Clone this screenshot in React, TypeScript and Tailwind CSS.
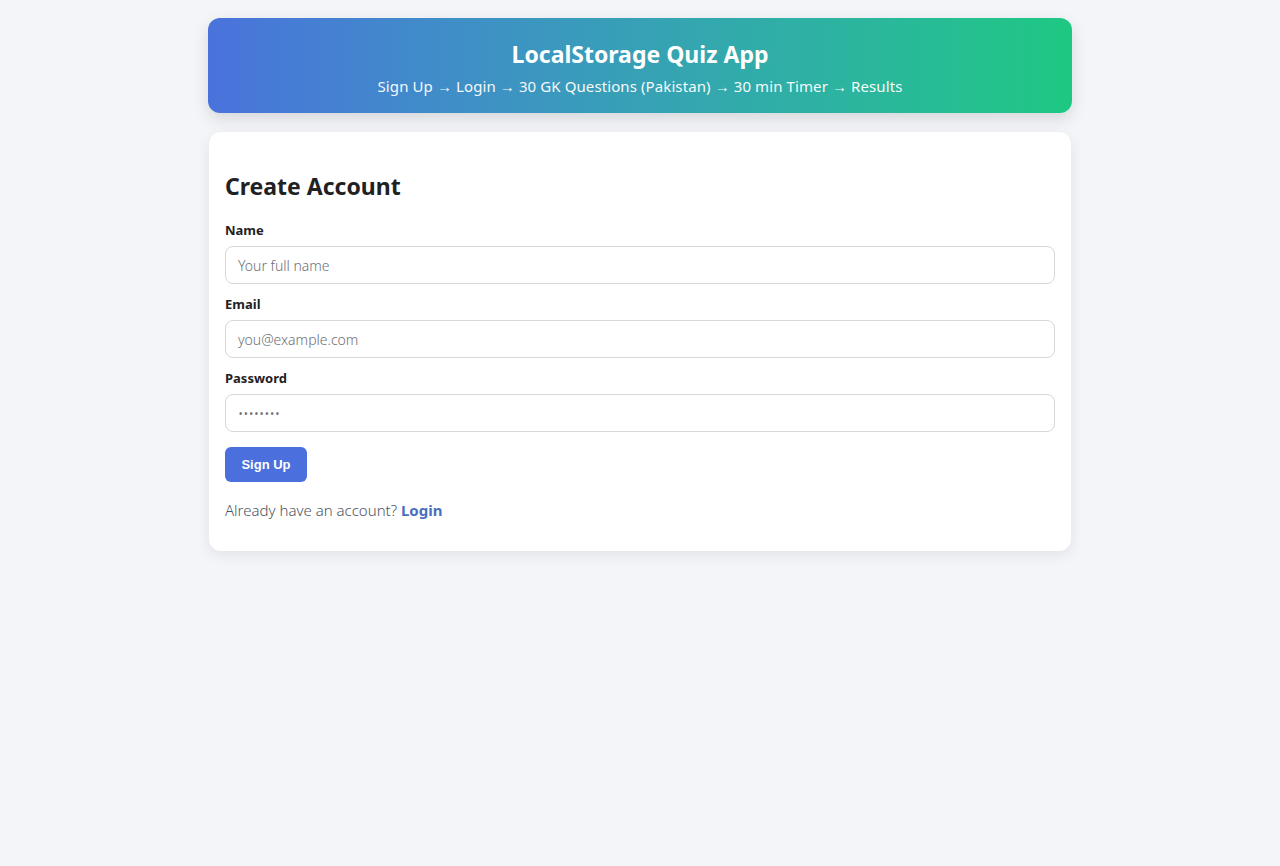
export default function App() {
  const font = { fontFamily: '"Noto Sans", "Open Sans", sans-serif' };
  return (
    <div className="min-h-[866px] bg-[#f3f5f9] pt-[18px]" style={font}>
      <div className="mx-auto w-[864px]">
        <header className="rounded-xl bg-gradient-to-r from-[#4a72dc] to-[#1ec882] px-4 pt-[22px] pb-[16px] text-center text-white shadow-[0_6px_16px_rgba(0,0,0,0.12)]">
          <h1 className="text-[23px] font-bold leading-[28px]">LocalStorage Quiz App</h1>
          <p className="mt-[7px] text-[15px] leading-[22px] tracking-[0.1px] opacity-95">
            Sign Up → Login → 30 GK Questions (Pakistan) → 30 min Timer → Results
          </p>
        </header>

        <main className="mx-px mt-[19px] rounded-xl bg-white px-4 pt-[39px] pb-[29px] shadow-[0_4px_14px_rgba(0,0,0,0.08)]">
          <h2 className="text-[23px] font-bold leading-[30px] text-[#1f2123]">Create Account</h2>

          <form className="mt-[20px]" onSubmit={(e) => e.preventDefault()}>
            <Field label="Name" type="text" placeholder="Your full name" />
            <Field label="Email" type="email" placeholder="you@example.com" />
            <Field label="Password" type="password" placeholder="••••••••" last />
            <button
              type="submit"
              className="mt-[15px] h-[35px] w-[82px] rounded-md bg-[#4b6fdc] text-[13px] font-bold text-white"
              style={{ fontFamily: '"Liberation Sans", Arial, sans-serif' }}
            >
              Sign Up
            </button>
          </form>

          <p className="mt-[16px] text-[15px] leading-[24px] font-light text-[#4b5563]">
            Already have an account? <a className="font-bold text-[#4a6fc0]">Login</a>
          </p>
        </main>
      </div>
    </div>
  );
}

function Field({
  label,
  type,
  placeholder,
  last,
}: {
  label: string;
  type: string;
  placeholder: string;
  last?: boolean;
}) {
  return (
    <div className={last ? "" : "mb-[11px]"}>
      <label className="block text-[13px] font-bold leading-[18px] text-[#1f2123]">{label}</label>
      <input
        type={type}
        placeholder={placeholder}
        className="mt-[7px] block h-[38px] w-full rounded-lg border border-[#d4d7dc] px-3 text-[14px] font-light text-[#333] placeholder:text-[#6b6f76] outline-none"
      />
    </div>
  );
}
